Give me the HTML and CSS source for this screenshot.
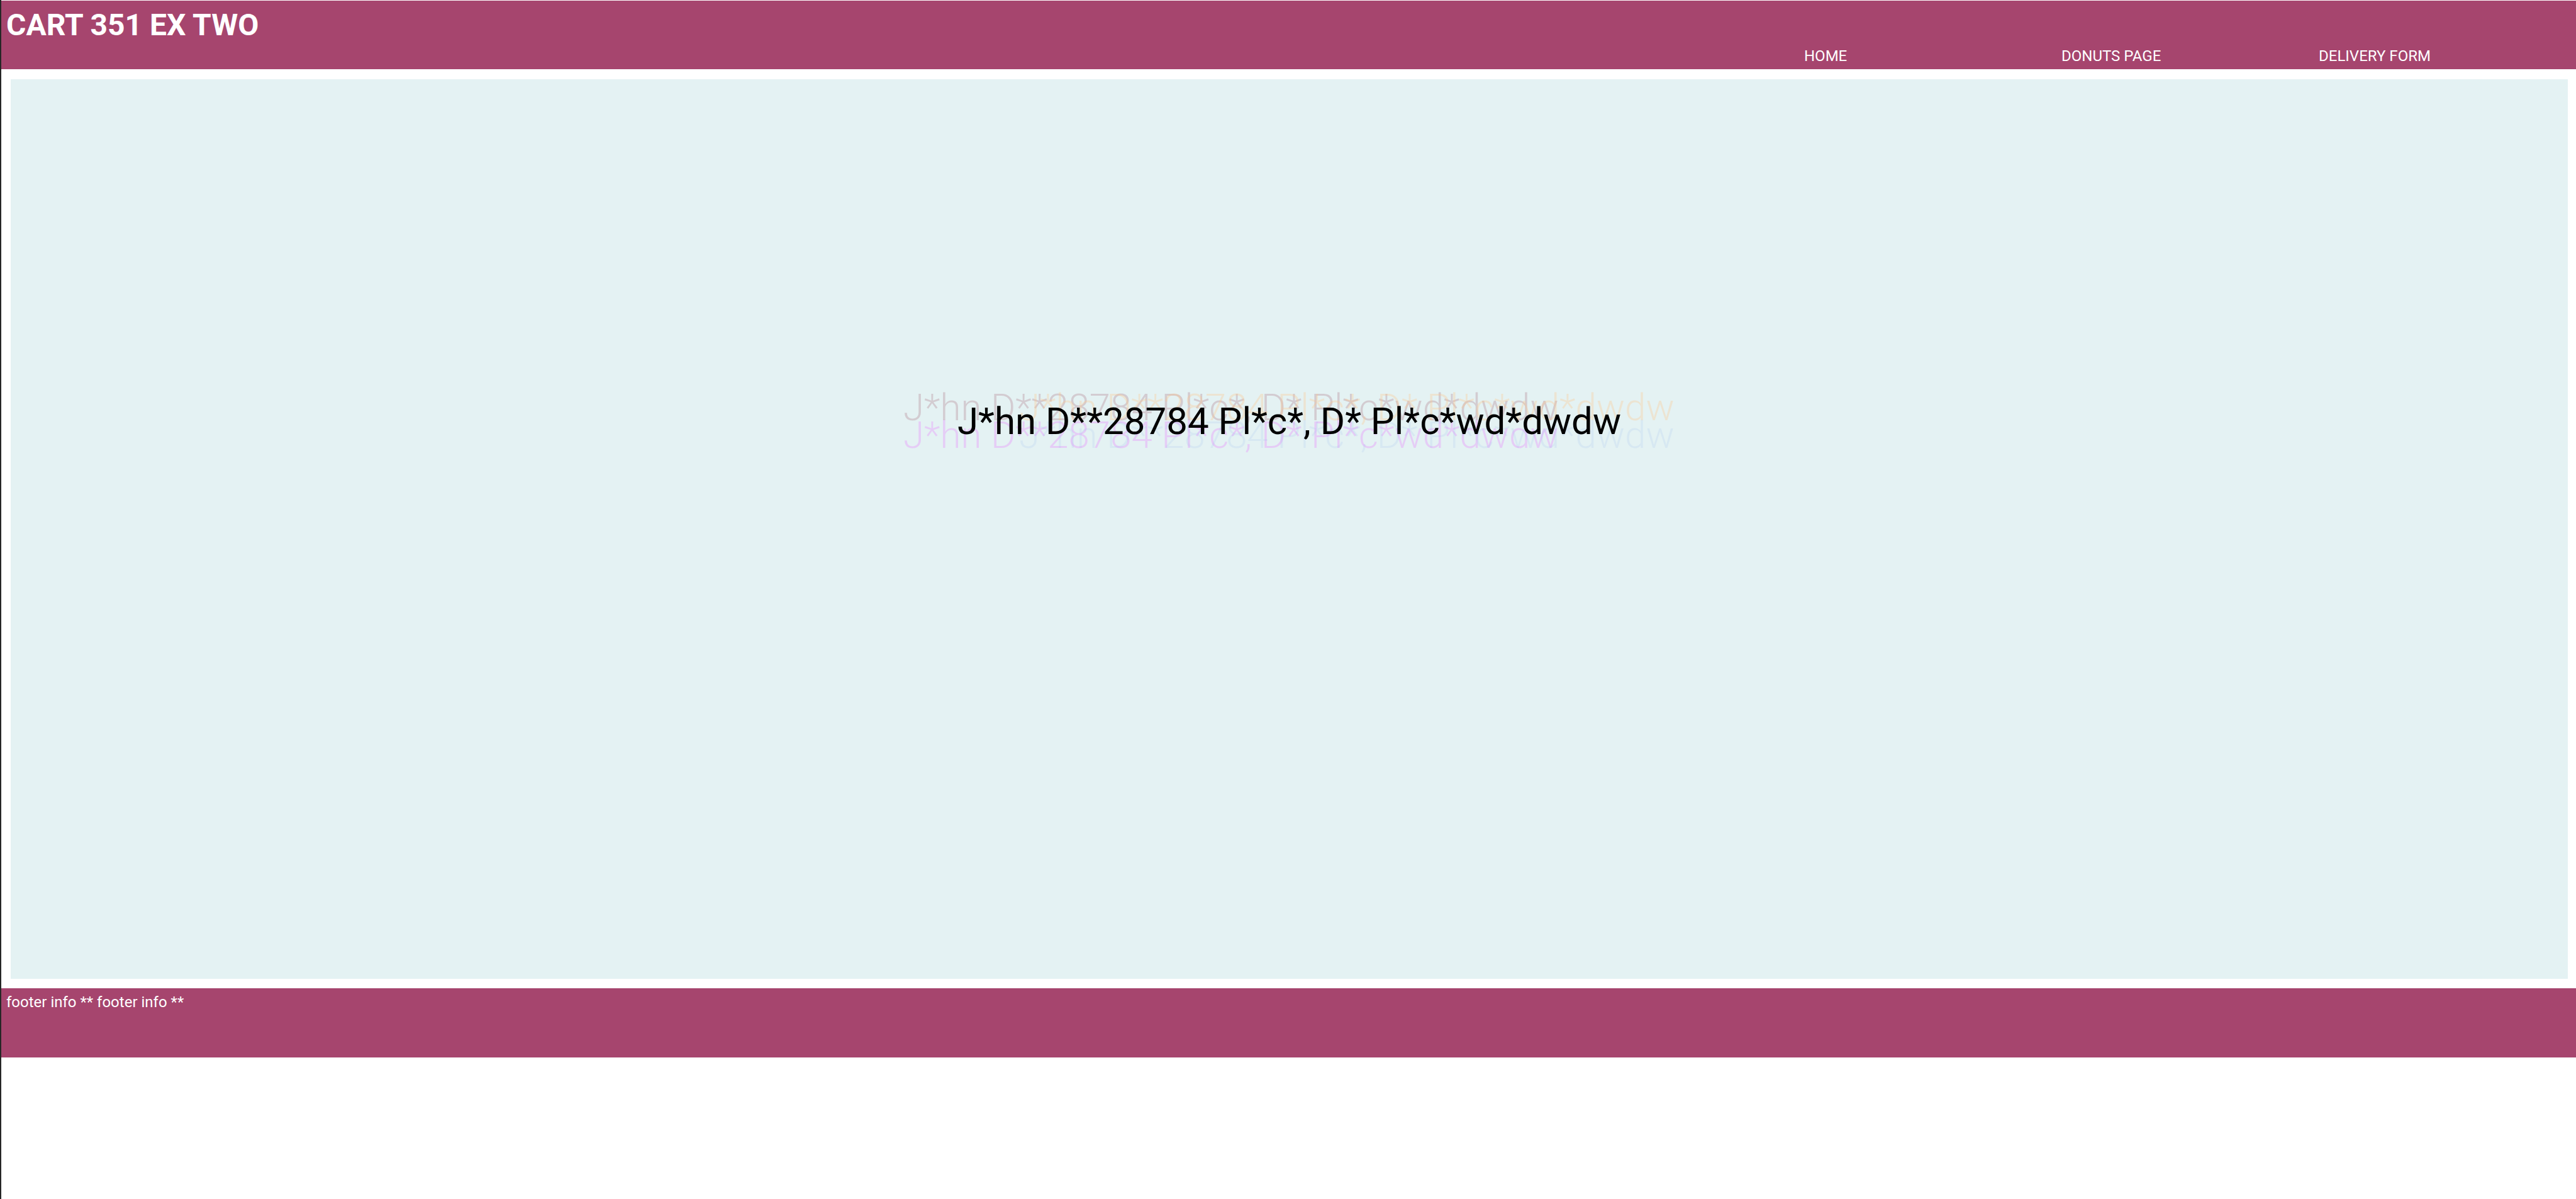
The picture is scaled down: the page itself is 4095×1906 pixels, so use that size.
FILE: index.html
```html
<!DOCTYPE html>
<html lang="en">
<head>
<meta charset="utf-8">
<title>CART 351 EX TWO</title>
<link rel="stylesheet" href="styles.css">
</head>
<body>
  <header class="site-header">
    <h1 class="site-title">CART 351 EX TWO</h1>
    <nav class="site-nav">
      <a class="nav-link" href="#">HOME</a>
      <a class="nav-link" href="#">DONUTS PAGE</a>
      <a class="nav-link" href="#">DELIVERY FORM</a>
    </nav>
  </header>
  <main class="panel">
    <div class="glitch">
      <span class="ghost ghost-gray" aria-hidden="true">J*hn D**28784 Pl*c*, D* Pl*c*wd*dwdw</span>
      <span class="ghost ghost-yellow" aria-hidden="true">J*hn D**28784 Pl*c*, D* Pl*c*wd*dwdw</span>
      <span class="ghost ghost-lilac" aria-hidden="true">J*hn D**28784 Pl*c*, D* Pl*c*wd*dwdw</span>
      <span class="ghost ghost-blue" aria-hidden="true">J*hn D**28784 Pl*c*, D* Pl*c*wd*dwdw</span>
      <span class="glitch-text">J*hn D**28784 Pl*c*, D* Pl*c*wd*dwdw</span>
    </div>
  </main>
  <footer class="site-footer">footer info ** footer info **</footer>
</body>
</html>
```

FILE: styles.css
```css
html, body {
  margin: 0;
  padding: 0;
}
body {
  background: #ffffff;
  border-left: 2px solid #262626;
  padding-top: 1px;
  min-height: 100vh;
  box-sizing: border-box;
  font-family: Roboto, "Liberation Sans", sans-serif;
}
.site-header {
  background: #a6456e;
  color: #ffffff;
  padding: 10px 0 7px 8px;
  display: flex;
  flex-direction: column;
  gap: 7px;
}
.site-title {
  margin: 0;
  font-size: 48px;
  font-weight: 700;
  line-height: normal;
}
.site-nav {
  display: flex;
  justify-content: flex-end;
}
.nav-link {
  width: 409px;
  color: #ffffff;
  text-decoration: none;
  font-size: 24px;
  line-height: normal;
}
.panel {
  display: block;
  margin: 16px 13px 15px 15px;
  height: 1430px;
  box-sizing: border-box;
  background: #e4f2f3;
  padding-top: 508px;
  text-align: center;
}
.glitch {
  position: relative;
  display: inline-block;
  font-size: 60px;
  line-height: normal;
  color: #000000;
}
.glitch-text {
  position: relative;
}
.ghost {
  position: absolute;
  top: 0;
  left: 0;
  white-space: nowrap;
  font-weight: 300;
}
.ghost-gray {
  color: rgba(150, 70, 90, 0.22);
  transform: translate(-86px, -22px);
}
.ghost-yellow {
  color: rgba(255, 200, 140, 0.32);
  transform: translate(98px, -22px);
}
.ghost-lilac {
  color: rgba(235, 110, 255, 0.28);
  transform: translate(-86px, 22px);
}
.ghost-blue {
  color: rgba(140, 180, 243, 0.14);
  transform: translate(98px, 22px);
}
.site-footer {
  background: #a6456e;
  color: #ffffff;
  height: 110px;
  box-sizing: border-box;
  padding: 8px 8px;
  font-size: 24px;
  line-height: normal;
}
```
